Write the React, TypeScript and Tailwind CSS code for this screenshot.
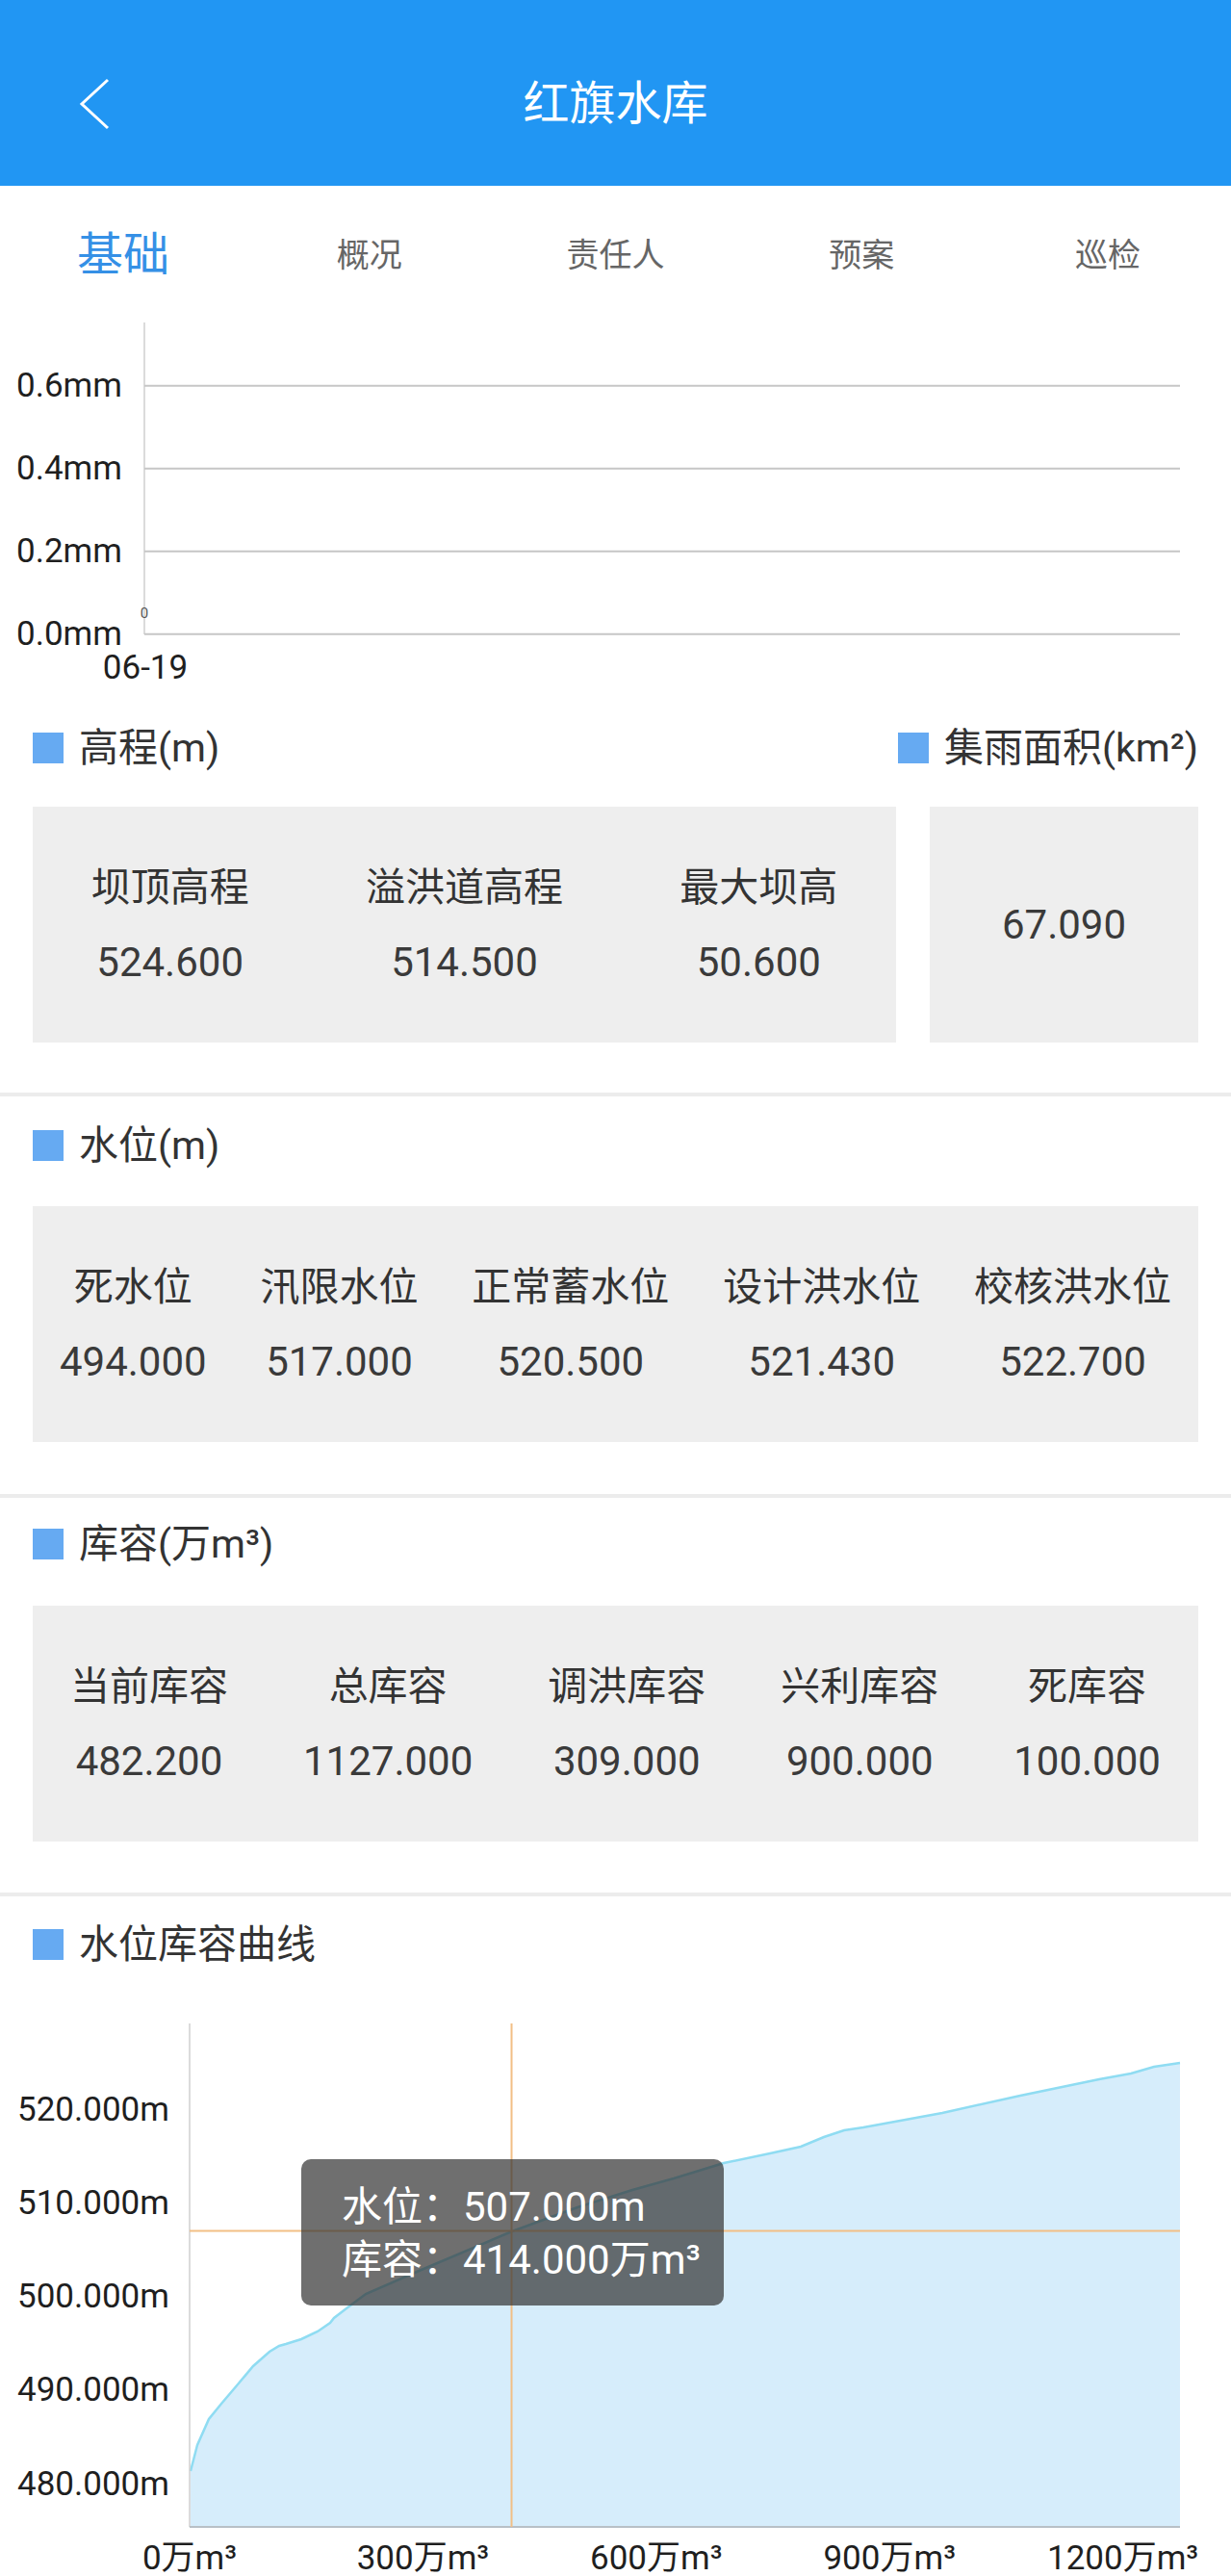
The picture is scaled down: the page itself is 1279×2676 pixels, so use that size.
import React from "react";

const tabs = ["基础", "概况", "责任人", "预案", "巡检"];

const elevation = [
  { label: "坝顶高程", value: "524.600" },
  { label: "溢洪道高程", value: "514.500" },
  { label: "最大坝高", value: "50.600" },
];

const waterLevels = [
  { label: "死水位", value: "494.000" },
  { label: "汛限水位", value: "517.000" },
  { label: "正常蓄水位", value: "520.500" },
  { label: "设计洪水位", value: "521.430" },
  { label: "校核洪水位", value: "522.700" },
];

const capacities = [
  { label: "当前库容", value: "482.200" },
  { label: "总库容", value: "1127.000" },
  { label: "调洪库容", value: "309.000" },
  { label: "兴利库容", value: "900.000" },
  { label: "死库容", value: "100.000" },
];

// curve points in page pixels, traced from the screenshot
const curvePts: [number, number][] = [
  [198, 2567], [205, 2540], [217, 2513], [230, 2497], [247, 2477], [263, 2458],
  [280, 2443], [290, 2437], [297, 2435], [313, 2430], [330, 2422], [343, 2413],
  [347, 2408], [360, 2398], [380, 2383], [433, 2360], [532, 2318], [600, 2293],
  [657, 2275], [700, 2263], [752, 2247], [800, 2237], [832, 2230], [856, 2220],
  [877, 2213], [897, 2210], [979, 2195], [1060, 2177], [1142, 2160], [1175, 2154],
  [1199, 2147], [1226, 2143],
];

const CHART2_TOP = 2050;

function SectionTitle({ children }: { children: React.ReactNode }) {
  return (
    <div className="flex items-center h-[60px]">
      <span className="w-[32px] h-[32px] bg-[#66aaf2] mr-[16px] shrink-0" />
      <span className="text-[41px] text-[#333] leading-none">{children}</span>
    </div>
  );
}

function StatBox({ items, className = "" }: { items: { label: string; value: string }[]; className?: string }) {
  return (
    <div className={`bg-[#eeeeee] h-[245px] flex items-center justify-around ${className}`}>
      {items.map((it) => (
        <div key={it.label} className="flex flex-col items-center leading-[78px]">
          <span className="text-[41px] text-[#333]">{it.label}</span>
          <span className="text-[42px] text-[#3a3a3a]">{it.value}</span>
        </div>
      ))}
    </div>
  );
}

function RainChart() {
  const grid = ["0.6mm", "0.4mm", "0.2mm", "0.0mm"];
  return (
    <svg width="1279" height="395" className="block">
      <line x1="150" y1="5" x2="150" y2="329" stroke="#cfcfcf" strokeWidth="1.5" />
      {grid.map((g, i) => {
        const y = 70.7 + i * 86;
        return (
          <g key={g}>
            <line x1="150" y1={y} x2="1226" y2={y} stroke="#c6c6c6" strokeWidth="2" />
            <text x="17" y={y} dominantBaseline="central" fontSize="35" fill="#1f1f1f">
              {g}
            </text>
          </g>
        );
      })}
      <text x="150" y="307" textAnchor="middle" dominantBaseline="central" fontSize="15" fill="#555">
        0
      </text>
      <text x="151" y="363" textAnchor="middle" dominantBaseline="central" fontSize="35" fill="#1f1f1f">
        06-19
      </text>
    </svg>
  );
}

function CurveChart() {
  const yOf = (v: number) => 2580 - (v - 480) * 9.72 - CHART2_TOP;
  const xOf = (c: number) => 197 + c * 0.808;
  const pts = curvePts.map(([x, y]) => [x, y - CHART2_TOP] as [number, number]);
  const line = pts.map(([x, y], i) => `${i === 0 ? "M" : "L"}${x} ${y}`).join(" ");
  const bottom = 2625 - CHART2_TOP;
  const area = `M198 ${bottom} ${pts.map(([x, y]) => `L${x} ${y}`).join(" ")} L1226 ${bottom} Z`;
  const cx = xOf(414);
  const cy = yOf(507);

  return (
    <div className="relative h-[626px]">
      <svg width="1279" height="626" className="block">
        <path d={area} fill="#d6edfb" />
        <path d={line} fill="none" stroke="#8fdcf2" strokeWidth="2.5" />
        <line x1="197" y1="52" x2="197" y2={bottom} stroke="#cfcfcf" strokeWidth="1.5" />
        <line x1="197" y1={bottom} x2="1226" y2={bottom} stroke="#b8c0c6" strokeWidth="2" />
        <line x1={cx} y1="52" x2={cx} y2={bottom} stroke="#f2bf86" strokeWidth="2" />
        <line x1="197" y1={cy} x2="1226" y2={cy} stroke="#f2bf86" strokeWidth="2" />
        {[520, 510, 500, 490, 480].map((v) => (
          <text key={v} x="18" y={yOf(v)} dominantBaseline="central" fontSize="35" fill="#1f1f1f">
            {v}.000m
          </text>
        ))}
        {[0, 300, 600, 900, 1200].map((c) => (
          <text key={c} x={xOf(c)} y="607" textAnchor="middle" dominantBaseline="central" fontSize="35" fill="#1f1f1f">
            {c}万m³
          </text>
        ))}
      </svg>
      <div className="absolute left-[313px] top-[193px] w-[439px] h-[152px] rounded-[10px] bg-[rgba(50,50,50,0.7)] pl-[42px] pt-[22px] text-white text-[42px] leading-[55px]">
        <div>水位：507.000m</div>
        <div>库容：414.000万m³</div>
      </div>
    </div>
  );
}

export default function App() {
  return (
    <div className="w-[1279px] bg-white font-['Roboto','Noto_Sans_CJK_SC',sans-serif] overflow-hidden">
      {/* Header */}
      <header className="h-[193px] bg-[#2196f3] flex items-center pt-[22px] px-[82px]">
        <svg width="32" height="54" viewBox="0 0 32 54" className="shrink-0">
          <polyline points="30,2 3,27 30,52" fill="none" stroke="white" strokeWidth="3" />
        </svg>
        <h1 className="flex-1 text-center text-white text-[48px] font-normal leading-none">红旗水库</h1>
        <div className="w-[32px]" />
      </header>

      {/* Tabs */}
      <nav className="h-[137px] grid grid-cols-5 items-center pt-[6px]">
        {tabs.map((t, i) => (
          <div
            key={t}
            className={`text-center leading-none ${i === 0 ? "text-[48px] text-[#3590e6]" : "text-[34px] text-[#666]"}`}
          >
            {t}
          </div>
        ))}
      </nav>

      <RainChart />

      {/* 高程 */}
      <section className="px-[34px] pt-[22px] pb-[52px]">
        <div className="flex justify-between items-center">
          <SectionTitle>高程(m)</SectionTitle>
          <SectionTitle>集雨面积(km²)</SectionTitle>
        </div>
        <div className="flex gap-[35px] mt-[31px]">
          <StatBox items={elevation} className="flex-1" />
          <div className="w-[279px] h-[245px] bg-[#eeeeee] flex items-center justify-center text-[42px] text-[#3a3a3a]">
            67.090
          </div>
        </div>
      </section>
      <div className="h-[4px] bg-[#ececec]" />

      {/* 水位 */}
      <section className="px-[34px] pt-[21px] pb-[54px]">
        <SectionTitle>水位(m)</SectionTitle>
        <StatBox items={waterLevels} className="mt-[33px]" />
      </section>
      <div className="h-[4px] bg-[#ececec]" />

      {/* 库容 */}
      <section className="px-[34px] pt-[18px] pb-[53px]">
        <SectionTitle>库容(万m³)</SectionTitle>
        <StatBox items={capacities} className="mt-[34px]" />
      </section>
      <div className="h-[4px] bg-[#ececec]" />

      {/* 水位库容曲线 */}
      <section className="px-[34px] pt-[20px]">
        <SectionTitle>水位库容曲线</SectionTitle>
      </section>
      <CurveChart />
    </div>
  );
}
